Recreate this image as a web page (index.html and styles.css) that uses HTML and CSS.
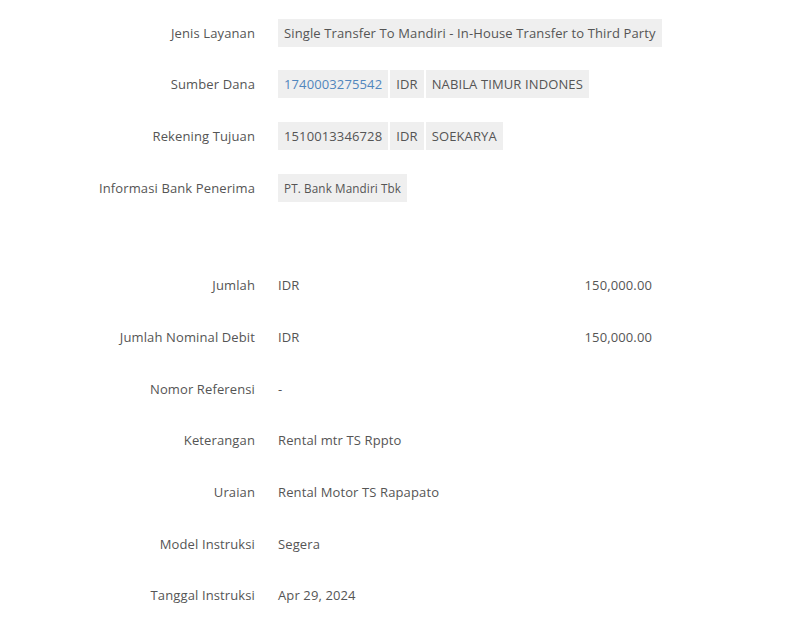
FILE: index.html
```html
<!DOCTYPE html>
<html lang="en">
<head>
  <meta charset="UTF-8">
  <meta name="viewport" content="width=device-width, initial-scale=1.0">
  <title>Konfirmasi Transfer</title>
  <link rel="stylesheet" href="styles.css">
</head>
<body>
  <div class="detail">
    <div class="section">
      <div class="row">
        <div class="label">Jenis Layanan</div>
        <div class="value">
          <span class="chip">Single Transfer To Mandiri - In-House Transfer to Third Party</span>
        </div>
      </div>
      <div class="row">
        <div class="label">Sumber Dana</div>
        <div class="value">
          <span class="chip link">1740003275542</span>
          <span class="chip">IDR</span>
          <span class="chip">NABILA TIMUR INDONES</span>
        </div>
      </div>
      <div class="row">
        <div class="label">Rekening Tujuan</div>
        <div class="value">
          <span class="chip">1510013346728</span>
          <span class="chip">IDR</span>
          <span class="chip">SOEKARYA</span>
        </div>
      </div>
      <div class="row">
        <div class="label">Informasi Bank Penerima</div>
        <div class="value">
          <span class="chip small">PT. Bank Mandiri Tbk</span>
        </div>
      </div>
    </div>

    <div class="section">
      <div class="row">
        <div class="label">Jumlah</div>
        <div class="value amount">
          <span>IDR</span>
          <span>150,000.00</span>
        </div>
      </div>
      <div class="row">
        <div class="label">Jumlah Nominal Debit</div>
        <div class="value amount">
          <span>IDR</span>
          <span>150,000.00</span>
        </div>
      </div>
      <div class="row">
        <div class="label">Nomor Referensi</div>
        <div class="value">-</div>
      </div>
      <div class="row">
        <div class="label">Keterangan</div>
        <div class="value">Rental mtr TS Rppto</div>
      </div>
      <div class="row">
        <div class="label">Uraian</div>
        <div class="value">Rental Motor TS Rapapato</div>
      </div>
      <div class="row">
        <div class="label">Model Instruksi</div>
        <div class="value">Segera</div>
      </div>
      <div class="row">
        <div class="label">Tanggal Instruksi</div>
        <div class="value">Apr 29, 2024</div>
      </div>
    </div>
  </div>
</body>
</html>
```

FILE: styles.css
```css
body {
  margin: 0;
  background-color: #fff;
  font-family: "Open Sans", "Liberation Sans", Arial, sans-serif;
  font-size: 13px;
  letter-spacing: 0.12px;
  color: #555;
}
.detail {
  padding-top: 7px;
}
.section + .section {
  margin-top: 46px;
}
.row {
  display: flex;
  align-items: center;
  height: 51.67px;
}
.label {
  width: 255px;
  flex-shrink: 0;
  text-align: right;
}
.value {
  margin-left: 23px;
  display: flex;
  gap: 2px;
}
.chip {
  background-color: #efefef;
  padding: 5px 6px;
  line-height: 18px;
}
.chip.link {
  color: #5186bd;
}
.chip.small {
  font-size: 11.7px;
}
.value.amount {
  width: 374px;
  justify-content: space-between;
}
```
